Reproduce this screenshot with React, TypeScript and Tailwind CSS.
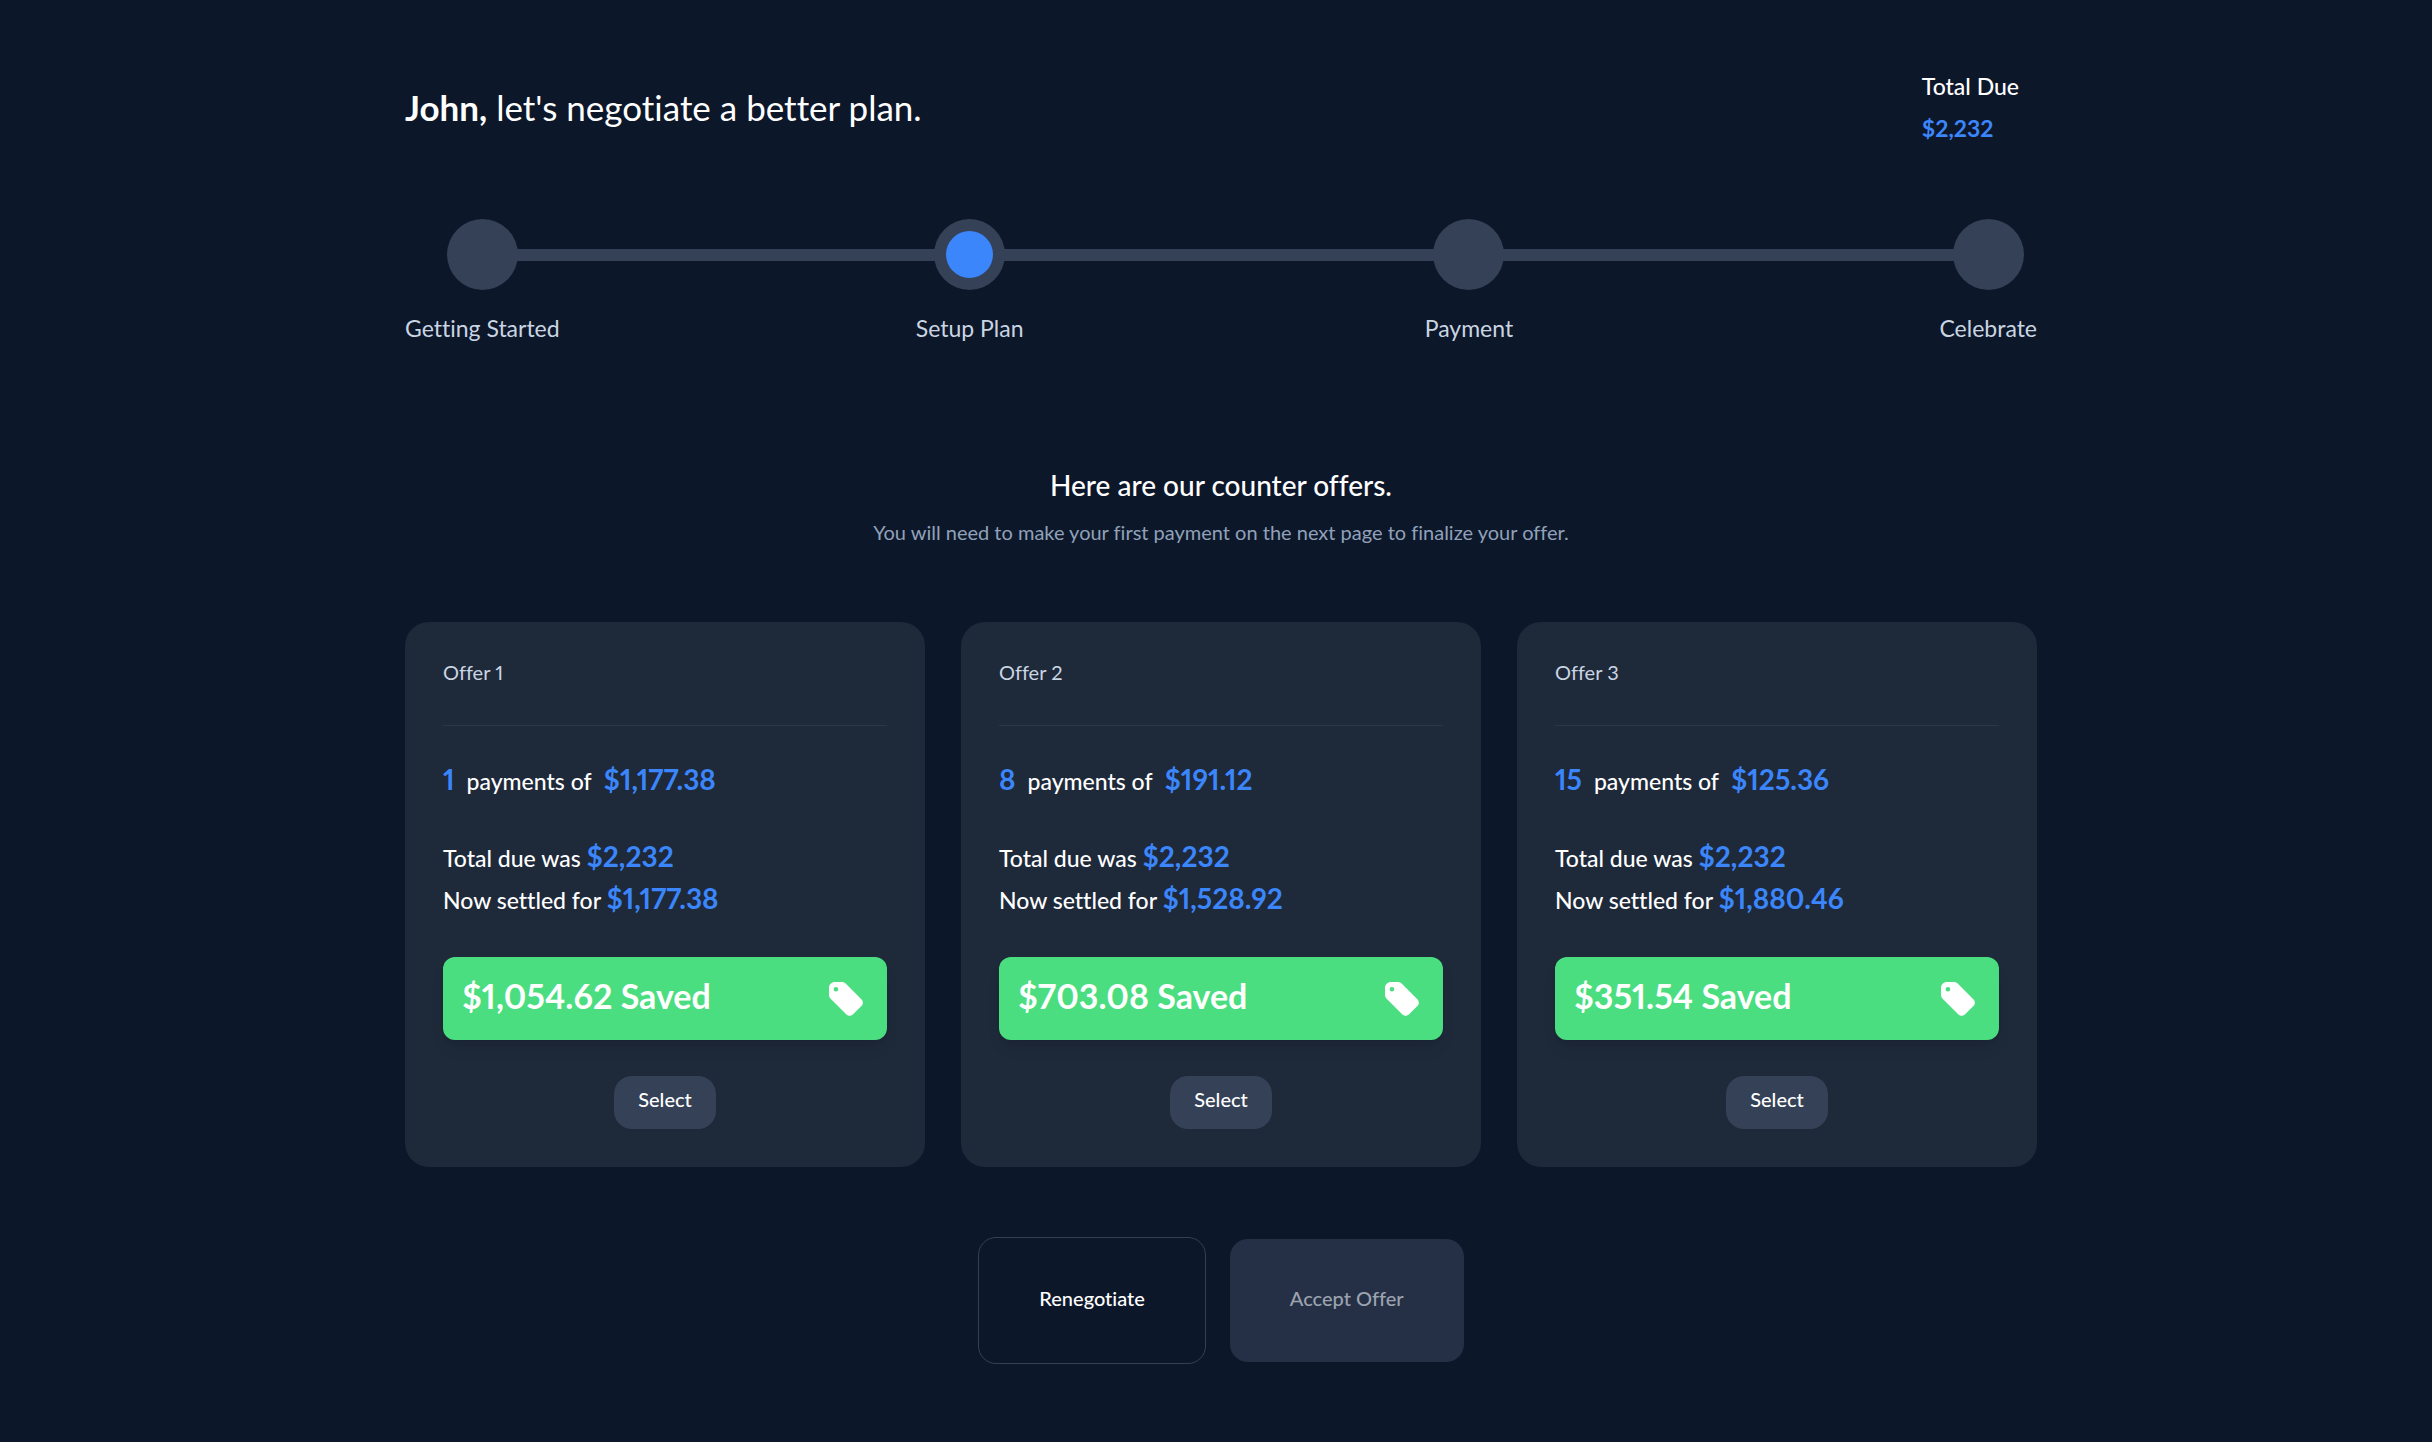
import { Fragment } from "react";

const steps = [
  { label: "Getting Started", active: false, space: "grow-[355]" },
  { label: "Setup Plan", active: true, space: "grow-[400]" },
  { label: "Payment", active: false, space: "grow-[425]" },
  { label: "Celebrate", active: false, space: "" },
];

const offers = [
  { id: 1, payments: 1, amount: "$1,177.38", settled: "$1,177.38", saved: "$1,054.62" },
  { id: 2, payments: 8, amount: "$191.12", settled: "$1,528.92", saved: "$703.08" },
  { id: 3, payments: 15, amount: "$125.36", settled: "$1,880.46", saved: "$351.54" },
];

const totalDue = "$2,232";

function TagIcon() {
  return (
    <svg className="size-[34px]" viewBox="0 0 103 103" fill="currentColor" fillRule="evenodd" aria-hidden="true">
      <path d="M18 0H38C43 0 48 2 52 6L98 52C104 58 104 67 98 73L73 98C67 104 58 104 52 98L5 51C2 48 0 44 0 39V18C0 8 8 0 18 0ZM21 15a7 7 0 1 0 0 14a7 7 0 1 0 0-14Z" />
    </svg>
  );
}

function Stepper() {
  return (
    <div className="relative mt-[70px]">
      {/* track behind the circles */}
      <div className="absolute top-[30px] right-12 left-20 h-3 bg-[#344157]"></div>
      <ol className="relative flex">
        {steps.map((step) => (
          <Fragment key={step.label}>
            <li className="flex flex-col items-center gap-5">
              <div className="flex size-[71px] items-center justify-center rounded-full bg-[#344157]">
                {step.active && <div className="size-[47px] rounded-full bg-[#3b86fb]"></div>}
              </div>
              <span className="text-[23px] leading-9 text-slate-300">{step.label}</span>
            </li>
            {step.space && <li aria-hidden="true" className={step.space}></li>}
          </Fragment>
        ))}
      </ol>
    </div>
  );
}

function OfferCard({ offer }: { offer: (typeof offers)[number] }) {
  return (
    <div className="rounded-3xl bg-[#1e293a] px-[38px] pt-[35px] pb-[38px]">
      <h3 className="text-[20px] leading-[30px] text-slate-300">Offer {offer.id}</h3>
      <hr className="mt-[38px] border-[#2c3748]" />
      <p className="mt-8 text-[28px] leading-[42px] font-bold text-[#3b86fb]">
        {offer.payments}
        <span className="mx-3 text-[23px] leading-none font-medium text-white">payments of</span>
        {offer.amount}
      </p>
      <div className="mt-[35px] text-[28px] leading-[42px] font-bold text-[#3b86fb]">
        <p>
          <span className="text-[23px] leading-none font-medium text-white">Total due was </span>
          {totalDue}
        </p>
        <p>
          <span className="text-[23px] leading-none font-medium text-white">Now settled for </span>
          {offer.settled}
        </p>
      </div>
      <div className="mt-[38px] flex h-[83px] items-center justify-between rounded-xl bg-[#4ade80] pr-6 pl-[19px] text-white shadow-lg">
        <span className="pb-1.5 text-[34px] leading-[42px] font-bold">{offer.saved} Saved</span>
        <TagIcon />
      </div>
      <div className="mt-9 flex justify-center">
        <button type="button" className="rounded-[18px] bg-[#344157] px-6 pt-2 pb-[15px] text-[20px] leading-[30px] font-medium text-white">
          Select
        </button>
      </div>
    </div>
  );
}

export default function App() {
  return (
    <div className="min-h-screen bg-[#0d172a] pl-2.5 font-['Lato',sans-serif] text-white proportional-nums [font-variant-ligatures:no-common-ligatures]">
      <main className="mx-auto max-w-[1632px] pt-[65px] pb-[76px]">
        <header className="flex items-center justify-between">
          <h1 className="text-[35px] leading-[42px]">
            <span className="font-bold">John,</span> let's negotiate a better plan.
          </h1>
          <div className="pr-[18px] text-[23px] leading-[42px]">
            <p className="font-medium">Total Due</p>
            <p className="font-bold text-[#3b86fb]">{totalDue}</p>
          </div>
        </header>

        <Stepper />

        <div className="mt-[118px] text-center">
          <h2 className="text-[28px] leading-[42px] font-medium">Here are our counter offers.</h2>
          <p className="mt-[11px] text-[20px] leading-[30px] text-slate-400">
            You will need to make your first payment on the next page to finalize your offer.
          </p>
        </div>

        <div className="mt-[75px] grid grid-cols-3 gap-9">
          {offers.map((offer) => (
            <OfferCard key={offer.id} offer={offer} />
          ))}
        </div>

        <div className="mt-[70px] flex items-center justify-center gap-6 text-[20px] leading-[30px] font-medium">
          <button type="button" className="rounded-[18px] border border-[#334155] px-[60px] pt-[45px] pb-[50px]">
            Renegotiate
          </button>
          <button type="button" disabled className="rounded-[18px] bg-[#253046] px-[60px] pt-11 pb-[49px] text-[#9ca3af]">
            Accept Offer
          </button>
        </div>
      </main>
    </div>
  );
}
